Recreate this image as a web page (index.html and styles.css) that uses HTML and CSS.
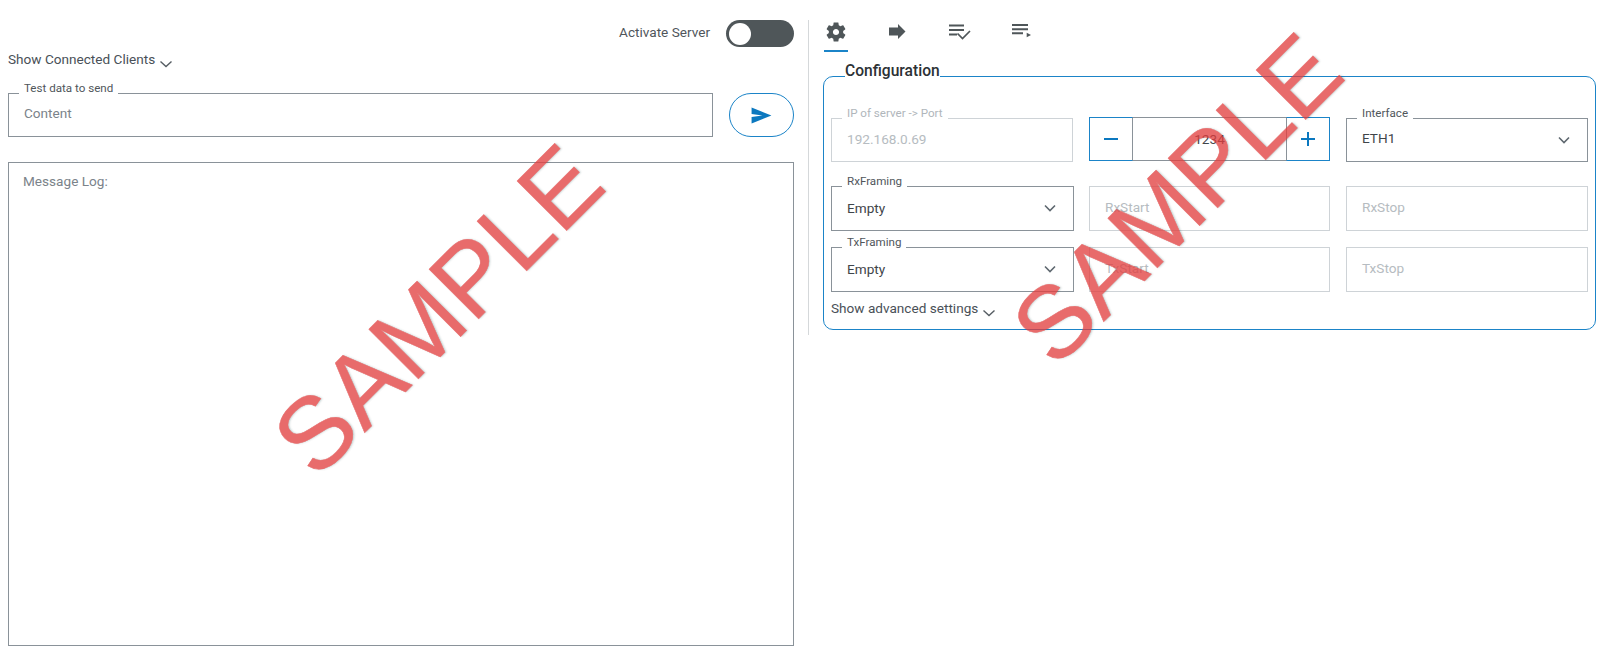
FILE: index.html
```html
<!DOCTYPE html>
<html lang="en">
<head>
<meta charset="utf-8">
<title>Server</title>
<link rel="stylesheet" href="styles.css">
</head>
<body>
<div class="app">
  <main class="left">
    <div class="activate">
      <span class="activate-label">Activate Server</span>
      <span class="toggle"><span class="knob"></span></span>
    </div>
    <div class="expander clients">
      <span>Show Connected Clients</span>
      <svg class="chev-sm" viewBox="0 0 14 8"><path d="M1.5 1.5 7 6.5l5.5-5"/></svg>
    </div>
    <div class="send-row">
      <div class="field send-field">
        <span class="legend">Test data to send</span>
        <span class="ph">Content</span>
      </div>
      <button class="send-btn" type="button">
        <svg viewBox="0 0 22 18" width="21" height="17"><path d="M0.5 0.5 21.5 9 0.5 17.5V10.7L12 9 0.5 7.3z"/></svg>
      </button>
    </div>
    <div class="log">Message Log:</div>
  </main>
  <section class="right">
    <nav class="tabs">
      <div class="tab active">
        <svg viewBox="0 0 24 24" width="24" height="24"><path d="M19.14 12.94c.04-.3.06-.61.06-.94 0-.32-.02-.64-.07-.94l2.03-1.58c.18-.14.23-.41.12-.61l-1.92-3.32c-.12-.22-.37-.29-.59-.22l-2.39.96c-.5-.38-1.03-.7-1.62-.94l-.36-2.54c-.04-.24-.24-.41-.48-.41h-3.84c-.24 0-.43.17-.47.41l-.36 2.54c-.59.24-1.13.57-1.62.94l-2.39-.96c-.22-.08-.47 0-.59.22L2.74 8.87c-.12.21-.08.47.12.61l2.03 1.58c-.05.3-.09.63-.09.94s.02.64.07.94l-2.03 1.58c-.18.14-.23.41-.12.61l1.92 3.32c.12.22.37.29.59.22l2.39-.96c.5.38 1.03.7 1.62.94l.36 2.54c.05.24.24.41.48.41h3.84c.24 0 .44-.17.47-.41l.36-2.54c.59-.24 1.13-.56 1.62-.94l2.39.96c.22.08.47 0 .59-.22l1.92-3.32c.12-.22.07-.47-.12-.61l-2.01-1.58zM12 15.1c-1.71 0-3.1-1.39-3.1-3.1s1.39-3.1 3.1-3.1 3.1 1.39 3.1 3.1-1.39 3.1-3.1 3.1z"/></svg>
      </div>
      <div class="tab">
        <svg viewBox="0 0 24 24" width="24" height="24"><path d="M3 7.500h9V4l7.500 7.500L12 19v-3.500H3z"/></svg>
      </div>
      <div class="tab">
        <svg viewBox="0 0 24 24" width="24" height="24"><path d="M1 4.500h15v2H1zM1 9h15v2H1zM1 13.500h8v2H1z"/><path class="tick" d="M9.500 13.500l5 5 7.500-7.500"/></svg>
      </div>
      <div class="tab">
        <svg viewBox="0 0 24 24" width="24" height="24"><path d="M2 4h16v2H2zM2 8.300h16v2H2zM2 12.300h11v2H2zM16.700 12.700l4.300 2.300-4.300 2.300z"/></svg>
      </div>
    </nav>
    <div class="config">
      <h2 class="config-title">Configuration</h2>
      <div class="config-grid">
        <div class="field disabled row-one ip-field">
          <span class="legend">IP of server -&gt; Port</span>
          <span class="ph">192.168.0.69</span>
        </div>
        <div class="stepper">
          <span class="step minus"><svg viewBox="0 0 14 14" width="14" height="14"><path d="M0 7h14"/></svg></span>
          <span class="step-value">1234</span>
          <span class="step plus"><svg viewBox="0 0 14 14" width="14" height="14"><path d="M0 7h14M7 0v14"/></svg></span>
        </div>
        <div class="field select row-one col-three">
          <span class="legend">Interface</span>
          <span class="value">ETH1</span>
          <svg class="chev" viewBox="0 0 12 8"><path d="M1 1.500 6 6.500l5-5"/></svg>
        </div>

        <div class="field select">
          <span class="legend">RxFraming</span>
          <span class="value">Empty</span>
          <svg class="chev" viewBox="0 0 12 8"><path d="M1 1.500 6 6.500l5-5"/></svg>
        </div>
        <div class="field disabled"><span class="ph">RxStart</span></div>
        <div class="field disabled col-three"><span class="ph">RxStop</span></div>

        <div class="field select">
          <span class="legend">TxFraming</span>
          <span class="value">Empty</span>
          <svg class="chev" viewBox="0 0 12 8"><path d="M1 1.500 6 6.500l5-5"/></svg>
        </div>
        <div class="field disabled"><span class="ph">TxStart</span></div>
        <div class="field disabled col-three"><span class="ph">TxStop</span></div>
      </div>
      <div class="expander advanced">
        <span>Show advanced settings</span>
        <svg class="chev-sm" viewBox="0 0 14 8"><path d="M1.500 1.500 7 6.500l5.500-5"/></svg>
      </div>
    </div>
  </section>
</div>
<div class="wm wm-a">SAMPLE</div>
<div class="wm wm-b">SAMPLE</div>
</body>
</html>
```

FILE: styles.css
```css
* { box-sizing: border-box; }
html, body { margin: 0; padding: 0; background: #fff; }
body {
  position: relative;
  width: 1603px;
  height: 649px;
  overflow: hidden;
  font: 13.6px/16px Roboto, "Liberation Sans", sans-serif;
  color: #43494e;
}
.app { display: flex; height: 649px; }

/* left column */
.left {
  width: 808px;
  padding: 20px 14px 0 8px;
  display: flex;
  flex-direction: column;
}
.activate {
  display: flex;
  justify-content: flex-end;
  align-items: center;
  gap: 16px;
  height: 27px;
}
.activate-label { color: #50565b; padding-bottom: 4px; }
.toggle {
  width: 68px;
  height: 27px;
  border-radius: 14px;
  background: #4f5659;
  display: flex;
  align-items: center;
  padding-left: 3px;
}
.knob { width: 22px; height: 22px; border-radius: 50%; background: #fff; }
.expander { display: flex; align-items: center; gap: 4px; color: #495057; }
.clients { margin-top: 4px; height: 16px; }
.chev-sm { width: 14px; height: 8px; margin-top: 9px; fill: none; stroke: #565d63; stroke-width: 1.4; }

.send-row { display: flex; justify-content: space-between; margin-top: 26px; }
.field {
  position: relative;
  height: 45px;
  border: 1px solid #8a9299;
  display: flex;
  align-items: center;
  padding: 0 15px 1px;
  background: #fff;
}
.send-field { width: 705px; height: 44px; padding-bottom: 5px; }
.legend {
  position: absolute;
  left: 10px;
  top: -12px;
  padding: 0 5px;
  background: #fff;
  font-size: 11.6px;
  line-height: 13px;
  color: #50565b;
  white-space: nowrap;
}
.ph { color: #7b838a; }
.send-btn {
  width: 65px;
  height: 44px;
  padding: 0;
  border: 1px solid #1b84c8;
  border-radius: 22px;
  background: #fff;
  display: flex;
  align-items: center;
  justify-content: center;
}
.send-btn svg { fill: #0b78bf; }
.log {
  flex: none;
  height: 484px;
  margin-top: 25px;
  padding: 10px 14px;
  border: 1px solid #8a9299;
  color: #7b838a;
}

/* right column */
.right {
  width: 795px;
  height: 315px;
  margin-top: 20px;
  border-left: 1px solid #d5d8da;
  padding-left: 14px;
}
.tabs { display: flex; gap: 38px; padding-left: 1px; }
.tab { width: 24px; height: 32px; border-bottom: 2px solid transparent; }
.tab.active { border-bottom-color: #1b84c8; }
.tab svg { display: block; fill: #4f5659; }
.tab .tick { fill: none; stroke: #4f5659; stroke-width: 1.7; }

.config {
  position: relative;
  width: 773px;
  height: 254px;
  margin-top: 24px;
  border: 1px solid #1b84c8;
  border-radius: 10px;
  padding: 41px 7px 0 7px;
}
.config-title {
  position: absolute;
  left: 21px;
  top: -17px;
  margin: 0;
  background: #fff;
  font-size: 15.6px;
  line-height: 22px;
  font-weight: 500;
  color: #2c3135;
}
.config-grid {
  display: grid;
  grid-template-columns: 243px 241px 243px;
  grid-template-rows: 52px 45px 45px;
  row-gap: 16px;
  column-gap: 15px;
}
.row-one { height: 44px; align-self: start; padding-bottom: 3px; }
.select.row-one { padding-bottom: 4px; }
.ip-field { margin-right: 1px; }
.col-three { margin-left: 1px; }
.disabled { border-color: #ced3d7; padding-bottom: 3px; }
.disabled .ph { color: #b6bcc1; }
.disabled .legend { color: #b0b6bb; }
.select { justify-content: space-between; }
.select .value { color: #3f454a; }
.chev { position: absolute; right: 17px; top: 17px; width: 12px; height: 8px; fill: none; stroke: #5f6870; stroke-width: 1.6; }

.stepper {
  display: flex;
  align-self: start;
  height: 44px;
  margin-top: -1px;
  border-top: 1px solid #8a9299;
  border-bottom: 1px solid #8a9299;
}
.step {
  width: 44px;
  height: 44px;
  margin-top: -1px;
  border: 1px solid #1b84c8;
  display: flex;
  align-items: center;
  justify-content: center;
}
.step svg { fill: none; stroke: #0b78bf; stroke-width: 2; }
.step.minus { border-right-color: #8a9299; }
.step.plus { border-left-color: #8a9299; }
.step-value { flex: 1; text-align: center; line-height: 42px; color: #3f454a; }

.advanced { margin-top: 8px; height: 16px; color: #495057; }

/* watermark */
.wm {
  position: absolute;
  font: 102px/102px "Liberation Sans", Arial, sans-serif;
  color: rgb(226, 62, 62);
  -webkit-text-stroke: 0.5px rgb(226, 62, 62);
  opacity: 0.76;
  text-shadow: 1px 1px 2px rgba(0, 60, 60, 0.3);
  transform: rotate(-45deg);
  white-space: nowrap;
  pointer-events: none;
}
.wm-a { left: 231px; top: 259px; }
.wm-b { left: 970px; top: 148px; }
```
